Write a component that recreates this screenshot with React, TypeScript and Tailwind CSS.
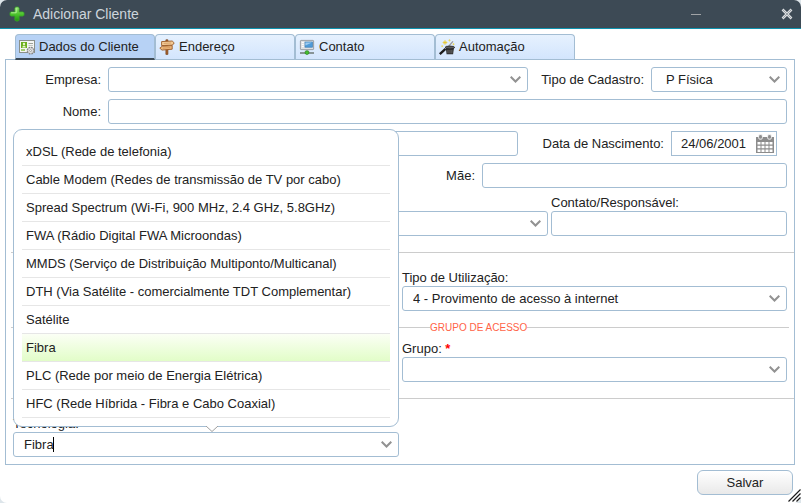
import { useId, type ReactNode } from "react";

const control =
  "h-[25px] w-full min-w-0 rounded-[3px] border border-[#a3bdd3] bg-white text-[13px] leading-4 text-[#222222] outline-none";

const technologies = [
  "xDSL (Rede de telefonia)",
  "Cable Modem (Redes de transmissão de TV por cabo)",
  "Spread Spectrum (Wi-Fi, 900 MHz, 2.4 GHz, 5.8GHz)",
  "FWA (Rádio Digital FWA Microondas)",
  "MMDS (Serviço de Distribuição Multiponto/Multicanal)",
  "DTH (Via Satélite - comercialmente TDT Complementar)",
  "Satélite",
  "Fibra",
  "PLC (Rede por meio de Energia Elétrica)",
  "HFC (Rede Híbrida - Fibra e Cabo Coaxial)",
];

function PlusIcon() {
  return (
    <svg className="size-4" viewBox="0 0 16 16" aria-hidden="true">
      <defs>
        <linearGradient id="plus" x1="0" y1="0" x2="0" y2="1">
          <stop offset="0" stopColor="#a4e884" />
          <stop offset="0.5" stopColor="#4fc42f" />
          <stop offset="1" stopColor="#209410" />
        </linearGradient>
      </defs>
      <path
        d="M6.8 1h2.4l.9.9v4h4l.9.9v2.4l-.9.9h-4v4l-.9.9H6.8l-.9-.9v-4h-4L1 9.2V6.8l.9-.9h4v-4z"
        fill="url(#plus)"
        stroke="#37a626"
        strokeWidth="0.8"
        strokeLinejoin="round"
      />
      <path d="M7.2 2.2v4.6h-5" fill="none" stroke="#c4f5aa" strokeWidth="0.8" />
    </svg>
  );
}

function CardIcon() {
  return (
    <svg className="size-4" viewBox="0 0 16 16" aria-hidden="true">
      <rect x="0.5" y="1.5" width="15" height="12" fill="#f4f5f2" stroke="#8b9089" />
      <rect x="2" y="3" width="6" height="6" fill="#6cae1b" />
      <circle cx="5" cy="5" r="1.2" fill="#e6f5c8" />
      <path d="M3.2 8.6c0-2.6 3.6-2.6 3.6 0z" fill="#e6f5c8" />
      <path d="M9.5 4.5H14" stroke="#9ca19a" />
      <path d="M2 11h4" stroke="#8fbf4d" strokeWidth="1.6" />
      <path d="M9.5 6.5H14" stroke="#c4c8c2" />
      <circle cx="11.6" cy="11.6" r="3.3" fill="#f2f2f2" stroke="#828282" strokeWidth="1.3" strokeDasharray="1.7 0.9" />
      <circle cx="11.6" cy="11.6" r="2.7" fill="#ededed" stroke="#a0a0a0" strokeWidth="0.6" />
      <circle cx="11.6" cy="11.6" r="1" fill="#ffffff" stroke="#808080" strokeWidth="0.7" />
    </svg>
  );
}

function SignIcon() {
  return (
    <svg className="size-4" viewBox="0 0 16 16" aria-hidden="true">
      <path d="M6.9.8h2v14.6h-2z" fill="#a9632b" stroke="#75401b" strokeWidth="0.7" />
      <path d="M2.6 2.6 13.2 2l2 1.9-1.7 2.2-10.9.5z" fill="#f4cc98" stroke="#9a5a27" strokeWidth="0.9" strokeLinejoin="round" />
      <path d="m13.2 6.6-10 .6-2.4 2 2.2 1.9 10.2-.9z" fill="#eeb87c" stroke="#9a5a27" strokeWidth="0.9" strokeLinejoin="round" />
      <path d="m4.6 4.4 7.5-.4M3.8 9.2l7.5-.6" stroke="#c88d55" strokeWidth="0.7" />
    </svg>
  );
}

function NetworkIcon() {
  return (
    <svg className="size-4" viewBox="0 0 16 16" aria-hidden="true">
      <rect x="1.4" y="1.4" width="13.2" height="9.2" rx="0.6" fill="#dfe1e3" stroke="#94999d" strokeWidth="0.9" />
      <rect x="6" y="3" width="7.4" height="5.2" fill="#4f9bd8" stroke="#3f7fb4" strokeWidth="0.7" />
      <path d="M6.4 3.4h6.6l-6.6 3.2z" fill="#9ccbf0" />
      <path d="M2.8 3.5h2M2.8 5.5h2M2.8 7.5h2" stroke="#ffffff" strokeWidth="0.9" />
      <path d="M6 11.4h4l.8 1H5.2z" fill="#b9bdc0" />
      <path d="M1 14h14" stroke="#65706a" strokeWidth="1.4" />
      <circle cx="8" cy="13.6" r="1.9" fill="#43c02f" stroke="#2b861d" strokeWidth="0.7" />
    </svg>
  );
}

function MagicIcon() {
  return (
    <svg className="size-4" viewBox="0 0 16 16" aria-hidden="true">
      <path d="m9 8 5-5.6" stroke="#9a9a9a" strokeWidth="1.3" />
      <path d="M6.8 8.6h8.2l-.9 6.6H7.6z" fill="#2b2b2b" />
      <ellipse cx="10.9" cy="8.5" rx="4.8" ry="1.4" fill="#5c5c5c" stroke="#222222" strokeWidth="0.8" />
      <path d="M9 10.8v3.6M11 10.8v3.6M12.9 10.8v3.6" stroke="#8b8b8b" strokeWidth="0.7" />
      <path d="m.8 15.2 5.7-5.4" stroke="#1b1b1b" strokeWidth="2.3" />
      <path d="M6 1.2v4.6M3.7 3.5h4.6M4.6 2.1l2.8 2.8M7.4 2.1 4.6 4.9" stroke="#e8c727" strokeWidth="0.8" />
      <path d="M10.5.3v2.2M9.4 1.4h2.2M14.5 4.2v2M13.5 5.2h2M3.2 6.3v1.8M2.3 7.2h1.8" stroke="#ecd34d" strokeWidth="0.8" />
    </svg>
  );
}

function CalendarIcon() {
  return (
    <svg className="h-5 w-[18px]" viewBox="0 0 18 20" aria-hidden="true">
      <path d="M0 3h18v16H0z" fill="#8c8c8c" />
      <rect x="2.6" y="0.6" width="3.8" height="4.6" rx="1.4" fill="#8c8c8c" stroke="#ffffff" strokeWidth="0.8" />
      <rect x="11.6" y="0.6" width="3.8" height="4.6" rx="1.4" fill="#8c8c8c" stroke="#ffffff" strokeWidth="0.8" />
      <path
        d="M1.5 8h3v2.6h-3zM5.5 8h3v2.6h-3zM9.5 8h3v2.6h-3zM13.5 8h3v2.6h-3zM1.5 11.7h3v2.6h-3zM5.5 11.7h3v2.6h-3zM9.5 11.7h3v2.6h-3zM13.5 11.7h3v2.6h-3zM1.5 15.4h3V18h-3zM5.5 15.4h3V18h-3zM9.5 15.4h3V18h-3zM13.5 15.4h3V18h-3z"
        fill="#ffffff"
      />
    </svg>
  );
}

function Chevron() {
  return (
    <svg
      className="pointer-events-none absolute top-[9px] right-[7px] h-[7px] w-[11px]"
      viewBox="0 0 11 7"
      fill="none"
      stroke="#929292"
      strokeWidth="2"
      aria-hidden="true"
    >
      <path d="m.7.7 4.8 4.8L10.300.7" />
    </svg>
  );
}

function Select({ id, value, label, inset = "pl-[10px]" }: { id?: string; value?: string; label?: string; inset?: string }) {
  return (
    <div className="relative min-w-0 flex-1">
      <select id={id} aria-label={label} className={`${control} block appearance-none pr-6 ${inset}`}>
        <option>{value ?? ""}</option>
      </select>
      <Chevron />
    </div>
  );
}

function SideLabel({ htmlFor, className, children }: { htmlFor: string; className: string; children: ReactNode }) {
  return (
    <label htmlFor={htmlFor} className={`shrink-0 text-right ${className}`}>
      {children}
    </label>
  );
}

function Tab({ icon, label, active }: { icon: ReactNode; label: string; active?: boolean }) {
  return (
    <button
      type="button"
      role="tab"
      aria-selected={Boolean(active)}
      className={`flex w-[140px] items-center gap-1 rounded-t-[4px] border border-[#a3bdd3] pl-[3px] ${
        active
          ? "h-[26px] border-b-2 border-b-[#3d4a55] bg-[#b7d2f5]"
          : "h-[25px] border-b-0 bg-linear-to-b from-[#e6f1fe] to-[#d3e5fd]"
      }`}
    >
      {icon}
      {label}
    </button>
  );
}

function TechnologyField() {
  const id = useId();
  return (
    <div className="min-w-0 flex-1">
      <label htmlFor={id} className="block">
        Tecnologia:
      </label>
      <div className="relative">
        <input
          id={id}
          role="combobox"
          aria-expanded="true"
          aria-controls="technology-list"
          defaultValue="Fibra"
          className={`${control} block px-[10px]`}
        />
        <span className="absolute top-[5px] left-10 h-[15px] w-px bg-black" />
        <Chevron />
        <div className="absolute inset-x-0 bottom-full z-10 mb-[5px] rounded-[9px] border border-[#a3bdd3] bg-white p-2">
          <ul id="technology-list" role="listbox">
            {technologies.map((name) => (
              <li
                key={name}
                role="option"
                aria-selected={name === "Fibra"}
                className={`flex h-7 items-center border-b border-[#e6e6e6] px-1 whitespace-nowrap ${
                  name === "Fibra" ? "bg-linear-to-b from-[#fbfff5] to-[#e2fdc8]" : ""
                }`}
              >
                {name}
              </li>
            ))}
          </ul>
          <svg className="absolute top-full left-1/2 h-[7px] w-3" viewBox="0 0 12 7" aria-hidden="true">
            <path d="M0-1h12v1L6 6 0 0z" fill="#ffffff" />
            <path d="m0 0 6 5.500L12 0" fill="none" stroke="#a0a0a0" />
          </svg>
        </div>
      </div>
    </div>
  );
}

export default function App() {
  return (
    <div className="min-h-screen bg-[#dde5ea] font-['Liberation_Sans',Arial,sans-serif] text-[13px] leading-4 text-[#222222]">
      <main className="relative flex min-h-screen flex-col rounded-[7px] bg-white">
        <header className="flex h-[29px] items-center rounded-t-[7px] border-b border-[#0f93ae] bg-[#3d4a55] pr-2 pl-[9px]">
          <PlusIcon />
          <h1 className="ml-2 flex-1 text-sm leading-4 text-[#cdd5dc]">Adicionar Cliente</h1>
          <button type="button" aria-label="Minimizar" className="flex h-4 w-[10px] items-center">
            <span className="h-px w-full bg-[#a0a3a6]" />
          </button>
          <button type="button" aria-label="Fechar" className="ml-20">
            <svg className="size-3" viewBox="0 0 12 12" aria-hidden="true">
              <path d="m1.500 1.500 9 9m0-9-9 9" stroke="#dcdfe1" strokeWidth="2.6" />
              <path d="m2 2 8 8m0-8-8 8" stroke="#8b9399" strokeWidth="0.8" />
            </svg>
          </button>
        </header>

        <div role="tablist" className="relative mt-[5px] -mb-px ml-[15px] flex h-[26px] items-start">
          <Tab icon={<CardIcon />} label="Dados do Cliente" active />
          <Tab icon={<SignIcon />} label="Endereço" />
          <Tab icon={<NetworkIcon />} label="Contato" />
          <Tab icon={<MagicIcon />} label="Automação" />
        </div>

        <form className="mr-[6px] ml-[5px] border border-[#a3bdd3] px-[5px] py-[7px]">
          <div className="flex flex-col gap-[7px] px-[2px]">
            <div className="flex items-center">
              <SideLabel htmlFor="empresa" className="mr-[7px] w-[88px]">Empresa:</SideLabel>
              <Select id="empresa" />
              <SideLabel htmlFor="tipo-cadastro" className="mr-[7px] ml-[13px]">Tipo de Cadastro:</SideLabel>
              <div className="flex w-[136px]">
                <Select id="tipo-cadastro" value="P Física" inset="pl-[14px]" />
              </div>
            </div>
            <div className="flex items-center">
              <SideLabel htmlFor="nome" className="mr-[7px] w-[88px]">Nome:</SideLabel>
              <input id="nome" className={`${control} px-[10px]`} />
            </div>
            <div className="flex items-center">
              <input aria-label="Documento" className={`${control} ml-[95px] flex-1 px-[10px]`} />
              <SideLabel htmlFor="nascimento" className="mr-[7px] ml-[25px]">Data de Nascimento:</SideLabel>
              <div className="mr-[10px] flex h-[25px] w-[106px] items-center border border-[#a3bdd3] pr-[2px]">
                <input id="nascimento" defaultValue="24/06/2001" className="w-full min-w-0 flex-1 pl-[9px] outline-none" />
                <button type="button" aria-label="Abrir calendário">
                  <CalendarIcon />
                </button>
              </div>
            </div>
            <div className="flex items-center">
              <input aria-label="Pai" className={`${control} ml-[95px] flex-1 px-[10px]`} />
              <SideLabel htmlFor="mae" className="mr-[7px] w-20">Mãe:</SideLabel>
              <div className="w-[305px]">
                <input id="mae" className={`${control} block px-[10px]`} />
              </div>
            </div>
            <div className="flex items-end gap-[3px]">
              <Select label="Situação" />
              <div className="w-[236px]">
                <label htmlFor="contato" className="block">Contato/Responsável:</label>
                <input id="contato" className={`${control} block px-[10px]`} />
              </div>
            </div>
          </div>

          <hr className="mt-4 -mr-[5px] mb-[17px] border-[#cccccc]" />
          <div className="flex justify-end px-[2px]">
            <div className="w-[385px]">
              <label htmlFor="utilizacao" className="block">Tipo de Utilização:</label>
              <div className="flex">
                <Select id="utilizacao" value="4 - Provimento de acesso à internet" />
              </div>
            </div>
          </div>

          <div className="mt-[10px] mb-[7px] flex h-[13px] items-center">
            <hr className="w-[419px] border-[#cccccc]" />
            <h2 className="pt-px text-[10px] leading-3 text-[#ff6347]">GRUPO DE ACESSO</h2>
            <hr className="flex-1 border-[#cccccc]" />
          </div>
          <div className="flex justify-end px-[2px]">
            <div className="w-[385px]">
              <label htmlFor="grupo" className="block">
                Grupo: <span className="font-bold text-[#ff0000]">*</span>
              </label>
              <div className="flex">
                <Select id="grupo" />
              </div>
            </div>
          </div>

          <hr className="mt-4 -mr-[5px] mb-[17px] border-[#cccccc]" />
          <div className="flex gap-[3px] px-[2px]">
            <TechnologyField />
            <div className="w-[385px]" />
          </div>
        </form>

        <footer className="flex justify-end pt-[5px] pr-2 pb-2">
          <button
            type="button"
            className="h-[25px] w-24 rounded-[6px] border border-[#a3bdd3] bg-linear-to-b from-white to-[#e9e9e9]"
          >
            Salvar
          </button>
        </footer>
        <svg className="absolute right-0 bottom-px size-[13px]" viewBox="0 0 13 13" aria-hidden="true">
          <path d="M.5 12.500 12.500.5M4.500 12.500l8-8M8.500 12.500l4-4" fill="none" stroke="#1c1c1c" strokeWidth="1.2" />
        </svg>
      </main>
    </div>
  );
}
